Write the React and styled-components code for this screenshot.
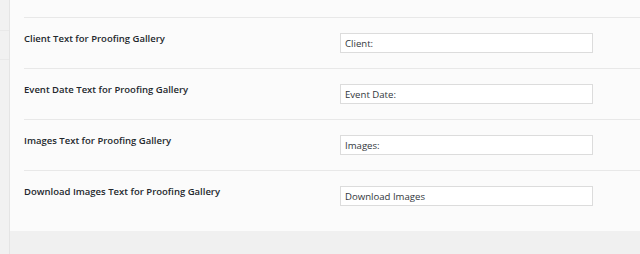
import React from "react";
import styled, { createGlobalStyle } from "styled-components";

const GlobalStyle = createGlobalStyle`
  html, body {
    margin: 0;
    padding: 0;
    background: #f1f1f1;
    font-family: "Open Sans", "Noto Sans", sans-serif;
  }
`;

const Page = styled.div`
  display: flex;
  width: 640px;
  height: 254px;
  overflow: hidden;
`;

const Sidebar = styled.div`
  width: 9px;
  flex: none;
  background: #f1f1f1;
  border-right: 1px solid #e4e4e4;
  display: flex;
  flex-direction: column;
`;

const SideItem = styled.div`
  height: ${(p) => p.h}px;
  border-bottom: 1px solid #e9e9e9;
`;

const Main = styled.div`
  flex: 1;
  display: flex;
  flex-direction: column;
`;

const Panel = styled.div`
  background: #fbfbfb;
  padding: 17px 0 10px 14px;
`;

const Row = styled.div`
  display: grid;
  grid-template-columns: 316px 253px;
  align-items: start;
  padding-top: 15px;
  box-sizing: border-box;
  border-top: 1px solid #e8e8e8;
  height: 51px;
`;

const Label = styled.div`
  font-size: 9.5px;
  line-height: 12px;
  font-weight: 600;
  color: #23282d;
`;

const Input = styled.input`
  width: 253px;
  height: 20px;
  box-sizing: border-box;
  margin: 0;
  padding: 0 4px;
  border: 1px solid #dcdcdc;
  background: #fff;
  font-family: inherit;
  font-size: 9.6px;
  color: #32373c;
  outline: none;
`;

const Footer = styled.div`
  flex: 1;
  background: #f0f0f0;
`;

const fields = [
  ["Client Text for Proofing Gallery", "Client:"],
  ["Event Date Text for Proofing Gallery", "Event Date:"],
  ["Images Text for Proofing Gallery", "Images:"],
  ["Download Images Text for Proofing Gallery", "Download Images"],
];

export default function App() {
  return (
    <>
      <GlobalStyle />
      <Page>
        <Sidebar>
          <SideItem h={30} />
          <SideItem h={28} />
        </Sidebar>
        <Main>
          <Panel>
            {fields.map(([label, value]) => (
              <Row key={label}>
                <Label>{label}</Label>
                <Input defaultValue={value} />
              </Row>
            ))}
          </Panel>
          <Footer />
        </Main>
      </Page>
    </>
  );
}
